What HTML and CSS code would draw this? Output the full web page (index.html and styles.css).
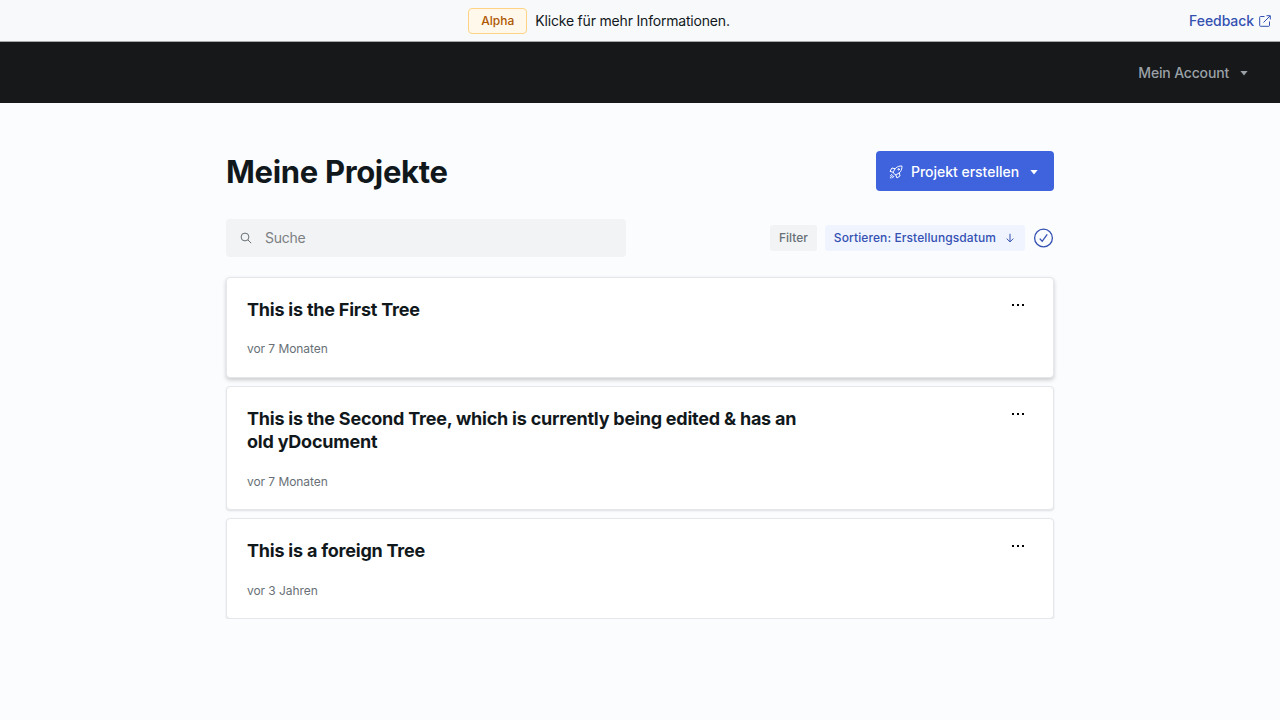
FILE: index.html
```html
<!DOCTYPE html>
<html lang="de">
<head>
<meta charset="utf-8">
<title>Meine Projekte</title>
<link rel="stylesheet" href="styles.css">
</head>
<body>
<aside class="banner">
  <div class="notice"><span class="badge">Alpha</span><span class="info">Klicke für mehr Informationen.</span></div>
  <a class="feedback"><span>Feedback</span>
    <svg width="12" height="12" viewBox="0 0 12 12" fill="none" stroke="currentColor" stroke-width="1"><path d="M5.500 1.500h-4a.8.8 0 0 0-.8.8v8.200a.8.8 0 0 0 .8.8h8.200a.8.8 0 0 0 .8-.8v-4M4.500 7.500 11 1M7.500.7h3.800v3.800"/></svg>
  </a>
</aside>
<nav class="nav"><span>Mein Account</span><i class="caret"></i></nav>
<main class="main">
  <header class="head">
    <h1 class="title">Meine Projekte</h1>
    <button class="create">
      <svg width="14" height="14" viewBox="0 0 14 14" fill="none" stroke="currentColor" stroke-width="1" stroke-linejoin="round" stroke-linecap="round"><path d="M4.300 7.400C5.200 3.600 8.200.8 12.900 1c.3 4.600-2.300 7.800-6.200 8.700zM5.900 3.700 3 3 1 6.300l3.300 1.100M10.300 7.900l.7 3-3 2.100-1.300-3.300M2.900 9.400 1.200 11M4 10.400 1.200 13M4.900 11.300 3.300 13"/><circle cx="9.600" cy="4.300" r=".7"/></svg>
      <span>Projekt erstellen</span><i class="caret"></i>
    </button>
  </header>
  <div class="tools">
    <label class="search">
      <svg width="12" height="12" viewBox="0 0 12 12" fill="none" stroke="currentColor" stroke-width="1"><circle cx="5" cy="5" r="3.900"/><path d="m7.800 7.800 3.400 3.400"/></svg>
      <span>Suche</span>
    </label>
    <div class="filters">
      <span class="chip">Filter</span>
      <span class="chip sort">Sortieren: Erstellungsdatum
        <svg width="10" height="10" viewBox="0 0 10 10" fill="none" stroke="currentColor" stroke-width="1"><path d="M5 .8v8M1.700 5.600 5 8.900l3.300-3.300"/></svg>
      </span>
      <svg class="check" width="21" height="20" viewBox="0 0 21 20" fill="none" stroke="currentColor" stroke-width="1.300"><circle cx="10.500" cy="10" r="8.900"/><path d="m6.700 10.600 2.500 2.700 5-7"/></svg>
    </div>
  </div>
  <section class="list">
    <article class="card raised">
      <div><h2 class="name">This is the First Tree</h2><p class="date">vor 7 Monaten</p></div>
      <svg class="more" width="14" height="4" viewBox="0 0 14 4"><path d="M1 1h2v2H1zM6 1h2v2H6zM11 1h2v2h-2z"/></svg>
    </article>
    <article class="card">
      <div><h2 class="name">This is the Second Tree, which is currently being edited &amp; has an old yDocument</h2><p class="date">vor 7 Monaten</p></div>
      <svg class="more" width="14" height="4" viewBox="0 0 14 4"><path d="M1 1h2v2H1zM6 1h2v2H6zM11 1h2v2h-2z"/></svg>
    </article>
    <article class="card">
      <div><h2 class="name">This is a foreign Tree</h2><p class="date">vor 3 Jahren</p></div>
      <svg class="more" width="14" height="4" viewBox="0 0 14 4"><path d="M1 1h2v2H1zM6 1h2v2H6zM11 1h2v2h-2z"/></svg>
    </article>
  </section>
</main>
</body>
</html>
```
FILE: styles.css
```css
* { box-sizing: border-box; }
body { margin: 0; background: #fbfcfe; color: #11181c; font: 14px/20px Inter, sans-serif; }
svg { display: block; flex: none; }
.banner { display: flex; align-items: center; height: 42px; padding: 0 9px; background: #f8f9fb; border-bottom: 1px solid #a5a7a9; }
.notice { display: flex; flex: 1; align-items: center; justify-content: center; gap: 8px; }
.info { letter-spacing: -.19px; }
.badge { height: 26px; padding: 0 12px; border: 1px solid #ffd386; border-radius: 4px; background: #fff8eb; color: #ad5700; font-size: 12px; font-weight: 500; line-height: 24px; }
.feedback { display: flex; align-items: center; gap: 5px; color: #3451b2; font-weight: 500; letter-spacing: -.07px; }
.nav { display: flex; align-items: center; justify-content: flex-end; gap: 11px; height: 61px; padding: 1px 32px 0 0; background: #16181a; color: #9ba1a6; font-weight: 500; letter-spacing: -.17px; }
.caret { width: 8px; height: 5px; background: currentColor; clip-path: polygon(0 0, 100% 0, 50% 100%); }
.main { width: 828px; margin: 0 auto; padding-top: 48px; }
.head { display: flex; align-items: center; justify-content: space-between; height: 40px; }
.title { margin: 0; padding-top: 1px; font-size: 31px; line-height: 40px; font-weight: 700; letter-spacing: -.33px; }
.create { display: flex; align-items: center; width: 178px; height: 40px; padding: 2px 16px 0 13px; border: 0; border-radius: 4px; background: #3e63dd; color: #fff; font: 500 14px/20px Inter, sans-serif; letter-spacing: -.02px; }
.create span { margin: 0 auto 0 8px; }
.tools { display: flex; align-items: center; justify-content: space-between; height: 38px; margin-top: 28px; }
.search { display: flex; align-items: center; gap: 13px; width: 400px; height: 38px; padding-left: 14px; border-radius: 4px; background: #f1f3f5; color: #687076; }
.search span { color: #7c7f82; letter-spacing: -.25px; }
.filters { display: flex; align-items: center; gap: 8px; }
.chip { height: 26px; padding: 0 9px; border-radius: 3px; background: #f1f3f5; color: #687076; font-size: 12px; font-weight: 500; line-height: 26px; letter-spacing: 0; }
.sort { display: flex; align-items: center; gap: 9px; padding-right: 10px; background: #f0f4ff; color: #3451b2; letter-spacing: .1px; }
.check { color: #3451b2; }
.list { display: flex; flex-direction: column; gap: 8px; margin-top: 20px; }
.card { display: flex; justify-content: space-between; padding: 20px 28px 18px 20px; border: 1px solid #e4e7eb; border-radius: 4px; background: #fff; box-shadow: 0 1px 2px rgba(0,0,0,.12); }
.raised { box-shadow: 0 2px 4px rgba(0,0,0,.2); }
.name { width: 570px; margin: 0; font-size: 18px; line-height: 23px; font-weight: 700; letter-spacing: -.22px; }
.date { margin: 19px 0 0; color: #687076; font-size: 12px; line-height: 19px; letter-spacing: -.06px; }
.raised .date { margin-top: 18px; margin-bottom: 1px; }
.more { margin-top: 5px; }
```
